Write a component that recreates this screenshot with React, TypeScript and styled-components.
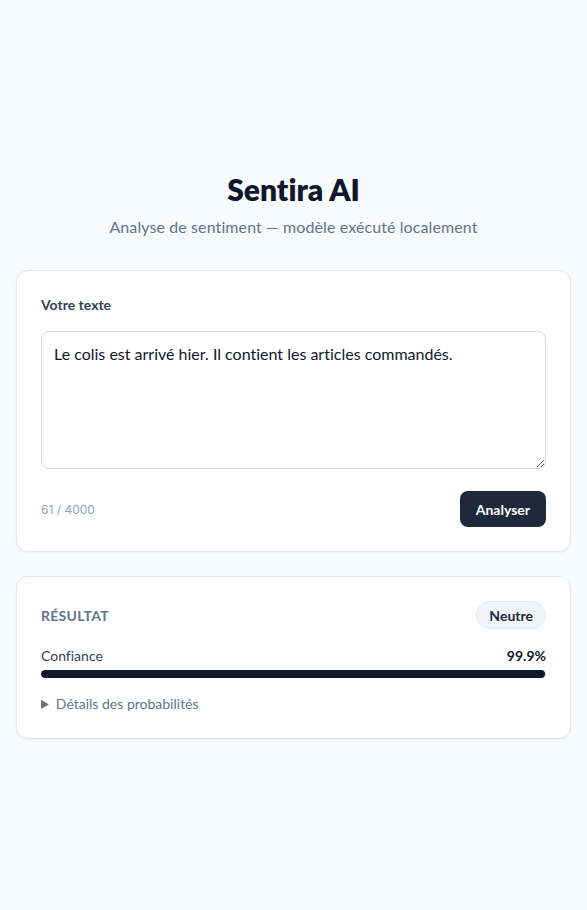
import React from "react";
import styled, { createGlobalStyle } from "styled-components";

const Global = createGlobalStyle`
  * { box-sizing: border-box; }
  html, body { margin: 0; padding: 0; background: #f8fafc; }
  body {
    font-family: Lato, "Noto Sans", sans-serif;
    color: #0f172a;
    font-variant-ligatures: none;
    font-feature-settings: "liga" 0, "clig" 0, "dlig" 0;
  }
`;

const Page = styled.main`
  min-height: 100vh;
  display: flex;
  flex-direction: column;
  justify-content: center;
  padding: 16px;
  gap: 24px;
`;

const Header = styled.header`
  text-align: center;
  display: flex;
  flex-direction: column;
  align-items: center;
  gap: 8px;
  margin-bottom: 7px;
`;

const Title = styled.h1`
  margin: 0;
  font-size: 30px;
  font-weight: 800;
  line-height: 36px;
  color: #0f172a;
`;

const Subtitle = styled.p`
  margin: 0;
  font-size: 16px;
  line-height: 24px;
  color: #64748b;
  letter-spacing: 0.1px;
`;

const Card = styled.section`
  background: #ffffff;
  border: 1px solid #e2e8f0;
  border-radius: 12px;
  box-shadow: 0 1px 2px rgba(15, 23, 42, 0.05);
  padding: 24px;
  display: flex;
  flex-direction: column;
`;

const Label = styled.label`
  font-size: 14px;
  font-weight: 700;
  color: #334155;
  line-height: 20px;
  margin-bottom: 16px;
`;

const TextArea = styled.textarea`
  width: 100%;
  height: 138px;
  border: 1px solid #cbd5e1;
  border-radius: 8px;
  padding: 10px 12px;
  font-family: inherit;
  font-size: 16px;
  line-height: 24px;
  color: #0f172a;
  font-variant-ligatures: none;
  font-feature-settings: "liga" 0, "clig" 0, "dlig" 0;
  resize: vertical;
  outline: none;
`;

const Footer = styled.div`
  display: flex;
  justify-content: space-between;
  align-items: center;
  margin-top: 22px;
`;

const Counter = styled.span`
  font-family: Inter, sans-serif;
  font-size: 12px;
  color: #94a3b8;
`;

const Button = styled.button`
  background: #1e293b;
  color: #ffffff;
  border: none;
  border-radius: 8px;
  height: 36px;
  padding: 0 16px;
  font-family: inherit;
  font-size: 14px;
  font-weight: 700;
  cursor: pointer;
`;

const ResultHead = styled.div`
  display: flex;
  justify-content: space-between;
  align-items: center;
`;

const ResultLabel = styled.h2`
  margin: 0;
  font-size: 14px;
  font-weight: 700;
  color: #64748b;
  text-transform: uppercase;
  letter-spacing: 0.02em;
`;

const Badge = styled.span`
  display: inline-flex;
  align-items: center;
  height: 28px;
  padding: 0 12px;
  border-radius: 999px;
  background: #f1f5f9;
  border: 1px solid #e2e8f0;
  font-size: 14px;
  font-weight: 700;
  color: #1e293b;
`;

const ConfRow = styled.div`
  display: flex;
  justify-content: space-between;
  align-items: baseline;
  margin-top: 17px;
  font-size: 14px;
  line-height: 20px;
  color: #334155;
`;

const ConfValue = styled.span`
  font-weight: 700;
  color: #0f172a;
`;

const Track = styled.div`
  margin-top: 4px;
  height: 8px;
  border-radius: 999px;
  background: #e2e8f0;
  overflow: hidden;
`;

const Fill = styled.div`
  height: 100%;
  background: #0f172a;
  border-radius: 999px;
`;

const Details = styled.details`
  margin-top: 16px;
  font-size: 14px;
  color: #64748b;
`;

const Summary = styled.summary`
  cursor: pointer;
  line-height: 20px;
`;

export default function App() {
  const text = "Le colis est arrivé hier. Il contient les articles commandés.";
  const conf = 99.9;
  return (
    <>
      <Global />
      <Page>
        <Header>
          <Title>Sentira AI</Title>
          <Subtitle>Analyse de sentiment — modèle exécuté localement</Subtitle>
        </Header>
        <Card>
          <Label htmlFor="txt">Votre texte</Label>
          <TextArea id="txt" defaultValue={text} />
          <Footer>
            <Counter>{text.length} / 4000</Counter>
            <Button>Analyser</Button>
          </Footer>
        </Card>
        <Card>
          <ResultHead>
            <ResultLabel>Résultat</ResultLabel>
            <Badge>Neutre</Badge>
          </ResultHead>
          <ConfRow>
            <span>Confiance</span>
            <ConfValue>{conf}%</ConfValue>
          </ConfRow>
          <Track>
            <Fill style={{ width: `${conf}%` }} />
          </Track>
          <Details>
            <Summary>Détails des probabilités</Summary>
          </Details>
        </Card>
      </Page>
    </>
  );
}
